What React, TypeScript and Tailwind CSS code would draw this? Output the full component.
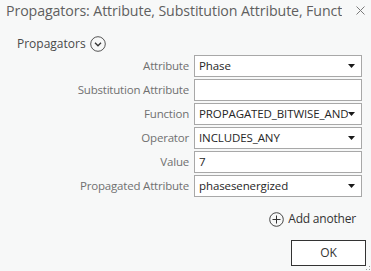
import React from "react";

interface FieldRow {
  label: string;
  value: string;
  dropdown: boolean;
}

const rows: FieldRow[] = [
  { label: "Attribute", value: "Phase", dropdown: true },
  { label: "Substitution Attribute", value: "", dropdown: false },
  { label: "Function", value: "PROPAGATED_BITWISE_AND", dropdown: true },
  { label: "Operator", value: "INCLUDES_ANY", dropdown: true },
  { label: "Value", value: "7", dropdown: false },
  { label: "Propagated Attribute", value: "phasesenergized", dropdown: true },
];

const font = { fontFamily: '"Open Sans", "Noto Sans", sans-serif' };

const Caret = () => (
  <svg width="7" height="4" viewBox="0 0 7 4" className="shrink-0">
    <path d="M0 0h7L3.5 4z" fill="#1a1a1a" />
  </svg>
);

export default function App() {
  return (
    <div
      className="w-[371px] h-[271px] bg-[#f7f8f8] relative overflow-hidden flex flex-col"
      style={font}
    >
      {/* Title bar */}
      <div className="flex items-center h-[21px] pl-[6px] pr-[6px]">
        <div className="w-[336px] overflow-hidden whitespace-nowrap text-[14.2px] leading-[21px] text-[#5f5f5f] tracking-[-0.1px]">
          Propagators: Attribute, Substitution Attribute, Function, Operator, Value, Propagated Attribute
        </div>
        <svg width="9" height="9" viewBox="0 0 9 9" className="ml-[14px]">
          <path d="M0.5 0.5l8 8M8.5 0.5l-8 8" stroke="#7a7a7a" strokeWidth="1" />
        </svg>
      </div>

      {/* Section header */}
      <div className="flex items-center h-[24px] mt-[11px] pl-[17px] gap-[4px]">
        <span className="text-[12px] leading-[16px] text-[#4a4a4a]">Propagators</span>
        <svg width="16" height="16" viewBox="0 0 16 16">
          <circle cx="8" cy="8" r="7.3" fill="none" stroke="#555" strokeWidth="1" />
          <path d="M5 6.8l3 3 3-3" fill="none" stroke="#333" strokeWidth="1.3" />
        </svg>
      </div>

      {/* Fields */}
      <div className="flex flex-col gap-[2px] mt-[-1px]">
        {rows.map((r) => (
          <div key={r.label} className="flex items-center h-[22px]">
            <div className="w-[194px] pr-[5px] text-right text-[11.5px] leading-[16px] tracking-[-0.2px] text-[#707070] whitespace-nowrap">
              {r.label}
            </div>
            <div className="w-[168px] h-[22px] border border-[#a8a8a8] bg-white flex items-center pl-[4px] pr-[6px]">
              <span className="flex-1 text-[11.5px] leading-[16px] tracking-[-0.1px] text-[#262626] whitespace-nowrap overflow-hidden">
                {r.value}
              </span>
              {r.dropdown && <Caret />}
            </div>
          </div>
        ))}
      </div>

      {/* Add another */}
      <div className="flex justify-end items-center gap-[4px] pr-[15px] mt-[14px]">
        <svg width="15" height="15" viewBox="0 0 15 15">
          <circle cx="7.5" cy="7.5" r="6.8" fill="none" stroke="#444" strokeWidth="1" />
          <path d="M7.5 3.5v8M3.5 7.5h8" stroke="#333" strokeWidth="1" />
        </svg>
        <span className="text-[12px] leading-[16px] tracking-[-0.2px] text-[#333]">Add another</span>
      </div>

      {/* OK */}
      <div className="flex justify-end pr-[5px] mt-[13px]">
        <button className="w-[75px] h-[26px] border border-[#333] bg-white text-[12px] text-[#333]">
          OK
        </button>
      </div>

      {/* resize grip */}
      <div className="absolute right-[1px] bottom-[1px] w-[4px] h-[4px] grid grid-cols-2 gap-[1px]">
        <span />
        <span className="bg-[#999] w-[1px] h-[1px]" />
        <span className="bg-[#999] w-[1px] h-[1px]" />
        <span className="bg-[#999] w-[1px] h-[1px]" />
      </div>
    </div>
  );
}
